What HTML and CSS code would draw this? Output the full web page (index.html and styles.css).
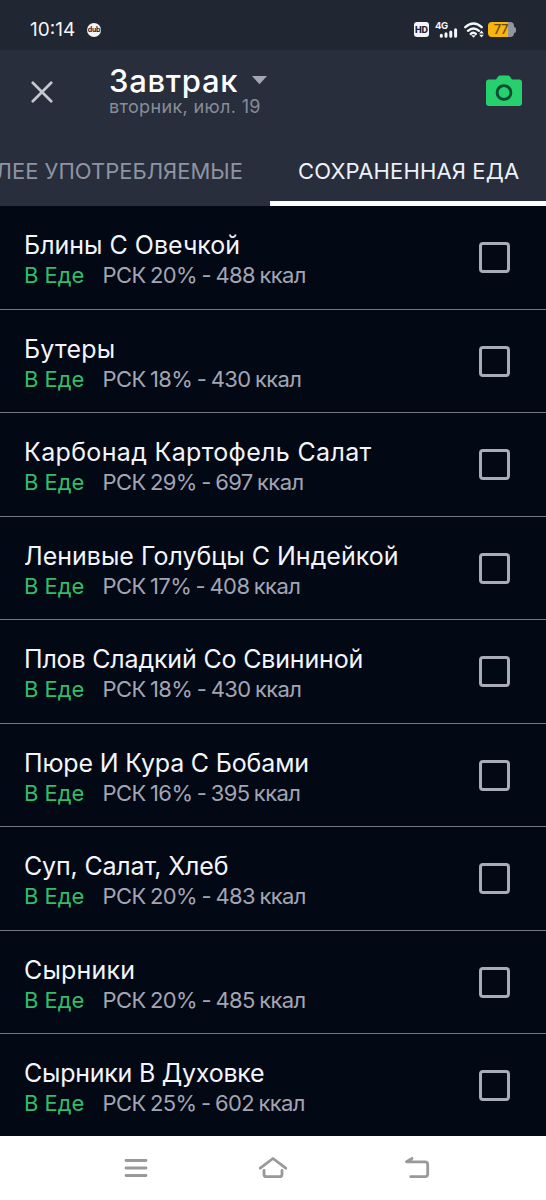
FILE: index.html
```html
<!DOCTYPE html>
<html lang="ru">
<head>
<meta charset="utf-8">
<title>Завтрак</title>
<link rel="stylesheet" href="styles.css">
</head>
<body>
<div class="status">
  <span class="time">10:14</span>
  <span class="dub">dub</span>
  <span class="hd">HD</span>
  <svg class="signal" width="24" height="18" viewBox="0 0 24 18">
    <text x="0" y="8" class="net">4G</text>
    <path d="M6.300 14.300v1M11 12.800v2.500M15.800 10.900v4.400M20.600 8.800v6.500" stroke="#f4f5f8" stroke-width="3" stroke-linecap="round"/>
  </svg>
  <svg class="wifi" width="20" height="18" viewBox="0 0 20 18">
    <g fill="none" stroke="#f4f5f8" stroke-width="2.400" stroke-linecap="round"><path d="M1.300 6.200q8.200-7.400 16.400 0M4 9.800q5.500-4.800 11 0M6.800 12.900q2.700-2.300 5 0"/></g>
    <path d="M7.200 14.200h4.600l-2.300 2.500zM15.200 12.400l2.300-2.800 2.300 2.800zM15.200 13.700l2.300 2.800 2.300-2.800z" fill="#f4f5f8"/>
  </svg>
  <span class="battery">77</span><span class="cap"></span>
</div>
<header class="header">
  <svg class="close" width="22" height="22" viewBox="0 0 22 22"><path d="M1.800 1.800l18.400 18.400M20.200 1.800L1.800 20.200" stroke="#c5c8d1" stroke-width="2.700" stroke-linecap="round"/></svg>
  <div class="heading">
    <div class="meal"><span>Завтрак</span><svg width="15" height="9" viewBox="0 0 15 9"><path d="M0 0h15L7.500 8.300z" fill="#a3a7b2"/></svg></div>
    <div class="date">вторник, июл. 19</div>
  </div>
  <svg class="camera" width="38" height="32" viewBox="0 0 38 32"><path d="M4 4.500h7L13.500 1Q14 .5 15 .5h8q1 0 1.500.5L27 4.500h7q3 0 3 3V28q0 3-3 3H4q-3 0-3-3V7.500q0-3 3-3z" fill="#26d06c"/><circle cx="19" cy="17.500" r="6.900" fill="none" stroke="#0b4b34" stroke-width="2.900"/></svg>
</header>
<nav class="tabs">
  <div class="tab recent"><span>БОЛЕЕ УПОТРЕБЛЯЕМЫЕ</span></div>
  <div class="tab active"><span>СОХРАНЕННАЯ ЕДА</span></div>
</nav>
<main class="list">
  <div class="row"><div><div class="name">Блины С Овечкой</div><div class="info"><b>В Еде</b><span>РСК 20% - 488 ккал</span></div></div><i class="box"></i></div>
  <div class="row"><div><div class="name wide">Бутеры</div><div class="info"><b>В Еде</b><span>РСК 18% - 430 ккал</span></div></div><i class="box"></i></div>
  <div class="row"><div><div class="name wider">Карбонад Картофель Салат</div><div class="info"><b>В Еде</b><span>РСК 29% - 697 ккал</span></div></div><i class="box"></i></div>
  <div class="row"><div><div class="name">Ленивые Голубцы С Индейкой</div><div class="info"><b>В Еде</b><span>РСК 17% - 408 ккал</span></div></div><i class="box"></i></div>
  <div class="row"><div><div class="name tight">Плов Сладкий Со Свининой</div><div class="info"><b>В Еде</b><span>РСК 18% - 430 ккал</span></div></div><i class="box"></i></div>
  <div class="row"><div><div class="name tight">Пюре И Кура С Бобами</div><div class="info"><b>В Еде</b><span>РСК 16% - 395 ккал</span></div></div><i class="box"></i></div>
  <div class="row"><div><div class="name tight">Суп, Салат, Хлеб</div><div class="info"><b>В Еде</b><span>РСК 20% - 483 ккал</span></div></div><i class="box"></i></div>
  <div class="row"><div><div class="name wide">Сырники</div><div class="info"><b>В Еде</b><span>РСК 20% - 485 ккал</span></div></div><i class="box"></i></div>
  <div class="row"><div><div class="name tighter">Сырники В Духовке</div><div class="info"><b>В Еде</b><span>РСК 25% - 602 ккал</span></div></div><i class="box"></i></div>
</main>
<footer class="system">
  <svg width="24" height="20" viewBox="0 0 24 20"><path d="M2 2.500h20M2 10h20M2 17.500h20"/></svg>
  <svg width="30" height="24" viewBox="0 0 30 24"><path d="M2.200 12.200L15 2.500l12.800 9.700M6 14.500v3.700q0 2.500 2.500 2.500h13q2.500 0 2.500-2.500v-3.700"/></svg>
  <svg width="26" height="24" viewBox="0 0 26 24"><path d="M8 2.500L2.500 5.800H21q2.700 0 2.700 2.700v9.500q0 2.700-2.700 2.700H6.700"/></svg>
</footer>
</body>
</html>
```

FILE: styles.css
```css
* { box-sizing: border-box; }
body { margin: 0; width: 546px; height: 1200px; overflow: hidden; display: flex; flex-direction: column; background: #020814; font-family: Inter, Roboto, sans-serif; }
svg { display: block; flex: none; }
.status { height: 50px; flex: none; background: #202632; display: flex; align-items: center; padding: 9px 0 0 30px; color: #f4f5f8; }
.time { width: 57px; font-size: 19px; white-space: nowrap; }
.dub { width: 14px; height: 14px; border-radius: 50%; background: #f4f5f8; color: #202632; font-size: 7px; font-weight: 700; line-height: 14px; text-align: center; letter-spacing: -.3px; }
.hd { margin-left: 313px; width: 15px; height: 15px; border-radius: 3px; background: #f4f5f8; color: #202632; font-size: 9px; font-weight: 800; line-height: 15px; text-align: center; letter-spacing: -.2px; }
.signal { margin-left: 6px; }
.net { font-size: 9.5px; font-weight: 700; fill: #f4f5f8; letter-spacing: -.3px; }
.wifi { margin-left: 5px; }
.battery { margin-left: 4px; width: 26px; height: 15px; border-radius: 4px; background: linear-gradient(90deg, #f9b50d 20px, #92959c 20px); color: #6b480c; font-size: 13px; line-height: 15px; text-align: center; font-weight: 500; letter-spacing: -.3px; }
.cap { width: 2px; height: 6px; border-radius: 0 2px 2px 0; background: #92959c; }
.header { height: 86px; flex: none; background: #282e3b; display: flex; align-items: flex-start; padding-left: 31px; }
.close { margin-top: 31px; }
.heading { margin: 13px 0 0 56px; width: 375px; }
.meal { display: flex; align-items: center; gap: 14px; height: 35px; line-height: 33px; color: #fff; font-size: 31px; font-weight: 500; letter-spacing: .7px; }
.meal svg { margin-top: -1px; }
.date { height: 18px; line-height: 18px; color: #878c99; font-size: 18px; letter-spacing: .35px; }
.camera { margin: 25px 0 0 .5px; }
.tabs { height: 70px; flex: none; background: #282e3b; display: flex; font-size: 22px; line-height: 70px; white-space: nowrap; }
.tab { height: 70px; }
.recent { width: 270px; color: #8e94a2; display: flex; justify-content: flex-end; padding-right: 27px; overflow: hidden; }
.active { flex: 1; color: #edf1fa; border-bottom: 5px solid #fff; padding-left: 28px; letter-spacing: .15px; }
.list { height: 930px; flex: none; overflow: hidden; }
.row { height: 103.55px; border-bottom: 1px solid #727780; display: flex; justify-content: space-between; padding: 24px 36px 0 24px; }
.name { height: 31px; line-height: 31px; color: #f3f5fa; font-size: 25px; white-space: nowrap; }
.wide { letter-spacing: .2px; }
.wider { letter-spacing: .34px; }
.tight { letter-spacing: -.17px; }
.tighter { letter-spacing: -.25px; }
.info { display: flex; height: 29px; line-height: 29px; font-size: 22px; color: #a2a5b3; white-space: nowrap; }
.info b { width: 78.5px; font-weight: 400; color: #31bd6a; }
.info span { letter-spacing: -.6px; word-spacing: -1.2px; }
.box { width: 31px; height: 31px; border: 3px solid #a9acb6; border-radius: 4px; margin-top: 12px; flex: none; }
.system { height: 64px; flex: none; background: #fff; display: flex; align-items: center; padding-left: 124px; }
.system svg:nth-child(2) { margin-left: 110px; }
.system svg:nth-child(3) { margin-left: 116px; }
.system path { fill: none; stroke: #999; stroke-width: 2.8; stroke-linecap: round; stroke-linejoin: round; }
```
